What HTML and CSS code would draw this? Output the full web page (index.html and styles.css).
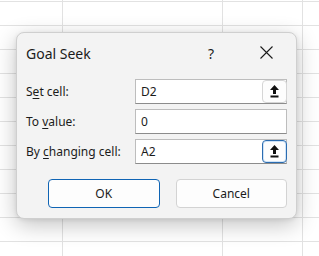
FILE: index.html
```html
<!DOCTYPE html>
<html>
<head>
<meta charset="utf-8">
<link rel="stylesheet" href="styles.css">
</head>
<body>
<div class="dialog">
  <div class="titlebar">
    <span class="title">Goal Seek</span>
    <span class="help">?</span>
    <span class="close"><svg width="13" height="13" viewBox="0 0 13 13"><path d="M0.5 0.5 L12.5 12.5 M12.5 0.5 L0.5 12.5" stroke="#1b1b1b" stroke-width="1.1" fill="none"/></svg></span>
  </div>
  <div class="form">
    <div class="row">
      <label class="lbl">S<u>e</u>t cell:</label>
      <div class="field"><span class="val">D2</span><span class="ref"><svg width="9" height="13" viewBox="0 0 9 13"><path d="M4.5 0 L9 5 L6 5 L6 9 L3 9 L3 5 L0 5 Z" fill="#111"/><rect x="0.5" y="10.5" width="8" height="2" fill="#111"/></svg></span></div>
    </div>
    <div class="row">
      <label class="lbl">To <u>v</u>alue:</label>
      <div class="field"><span class="val">0</span></div>
    </div>
    <div class="row">
      <label class="lbl">By <u>c</u>hanging cell:</label>
      <div class="field"><span class="val">A2</span><span class="ref focus"><svg width="9" height="13" viewBox="0 0 9 13"><path d="M4.5 0 L9 5 L6 5 L6 9 L3 9 L3 5 L0 5 Z" fill="#111"/><rect x="0.5" y="10.5" width="8" height="2" fill="#111"/></svg></span></div>
    </div>
  </div>
  <div class="buttons">
    <div class="btn primary">OK</div>
    <div class="btn">Cancel</div>
  </div>
</div>
</body>
</html>
```
FILE: styles.css
```css
html, body {
  margin: 0;
  padding: 0;
}
body {
  width: 319px;
  height: 256px;
  overflow: hidden;
  box-sizing: border-box;
  padding: 32px 0 0 16px;
  font-family: "Segoe UI", "Noto Sans", "Open Sans", sans-serif;
  color: #1b1b1b;
  background-color: #ffffff;
  background-image:
    linear-gradient(to right, transparent 62px, #e2e2e2 62px, #e2e2e2 63px, transparent 63px),
    linear-gradient(to right, transparent 222px, #e2e2e2 222px, #e2e2e2 223px, transparent 223px),
    linear-gradient(to right, transparent 302px, #e2e2e2 302px, #e2e2e2 303px, transparent 303px),
    repeating-linear-gradient(to bottom, transparent 0, transparent 1px, #e2e2e2 1px, #e2e2e2 2px, transparent 2px, transparent 24px);
}
.dialog {
  width: 281px;
  height: 187px;
  box-sizing: border-box;
  background: #f3f3f3;
  border: 1px solid #cfcfcf;
  border-radius: 8px;
  box-shadow: 0 6px 22px rgba(0, 0, 0, 0.24), 0 1px 4px rgba(0, 0, 0, 0.08);
  display: flex;
  flex-direction: column;
}
.titlebar {
  height: 39px;
  display: flex;
  align-items: center;
  padding: 0 0 0 9px;
}
.title {
  font-size: 14px;
  flex: 1;
  padding-top: 1px;
}
.help {
  font-size: 14px;
  width: 16px;
  margin-right: 36px;
  padding-top: 1px;
}
.close {
  width: 13px;
  height: 13px;
  margin-right: 23px;
  display: flex;
}
.form {
  display: flex;
  flex-direction: column;
  gap: 5px;
  padding: 7px 9px 0 9px;
}
.row {
  display: flex;
  align-items: center;
  height: 25px;
}
.lbl {
  width: 109px;
  font-size: 12px;
}
.lbl u {
  text-underline-offset: 2px;
}
.field {
  flex: 1;
  height: 25px;
  box-sizing: border-box;
  background: #ffffff;
  border: 1px solid #bdbdbd;
  border-bottom-color: #8c8c8c;
  display: flex;
  align-items: center;
  justify-content: space-between;
  padding-left: 5px;
}
.val {
  font-size: 12px;
}
.ref {
  width: 25px;
  height: 23px;
  box-sizing: border-box;
  border: 1px solid #d6d6d6;
  border-radius: 4px;
  background: #fdfdfd;
  display: flex;
  align-items: center;
  justify-content: center;
  margin-right: -1px;
}
.ref.focus {
  border: 1px solid #2b6cb0;
  box-shadow: inset 0 0 0 1px #cfe3f7;
}
.buttons {
  display: flex;
  gap: 16px;
  padding: 15px 9px 0 31px;
}
.btn {
  flex: 1;
  height: 29px;
  box-sizing: border-box;
  background: #fdfdfd;
  border: 1px solid #d3d3d3;
  border-radius: 4px;
  display: flex;
  align-items: center;
  justify-content: center;
  font-size: 12px;
}
.btn.primary {
  border: 1px solid #0f64b4;
}
```
